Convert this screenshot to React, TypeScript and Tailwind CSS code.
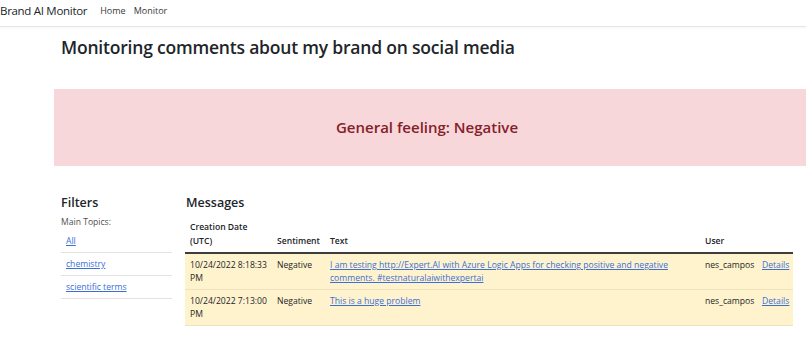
import React from 'react';

const rows = [
  {
    date: '10/24/2022 8:18:33 PM',
    sentiment: 'Negative',
    text: 'I am testing http://Expert.AI with Azure Logic Apps for checking positive and negative comments. #testnaturalaiwithexpertai',
    user: 'nes_campos',
  },
  {
    date: '10/24/2022 7:13:00 PM',
    sentiment: 'Negative',
    text: 'This is a huge problem',
    user: 'nes_campos',
  },
];

const topics = ['All', 'chemistry', 'scientific terms'];

export default function App() {
  return (
    <div className="w-[806px] h-[345px] overflow-hidden bg-white text-[#212529] font-['Open_Sans',sans-serif] text-[8.6px] leading-[13px]">
      <nav className="h-[27px] flex items-center border-b border-[#e6e6e6] shadow-[0_1px_2px_rgba(0,0,0,0.04)]">
        <span className="text-[11.5px] text-[#212529] mr-[13px] -mt-[5px] tracking-[-0.3px]">Brand AI Monitor</span>
        <span className="text-[9px] text-[#3a3a3a] mr-[8px] -mt-[5px]">Home</span>
        <span className="text-[9px] text-[#3a3a3a] -mt-[5px]">Monitor</span>
      </nav>

      <h1 className="ml-[61px] mt-[7px] text-[17.5px] leading-[26px] font-semibold tracking-[-0.2px]">
        Monitoring comments about my brand on social media
      </h1>

      <div className="ml-[54px] mt-[29px] h-[77px] bg-[#f8d7da] flex items-center justify-center pr-[6px]">
        <span className="text-[15px] font-semibold text-[#842029]">General feeling: Negative</span>
      </div>

      <div className="flex mt-[28px]">
        <div className="ml-[61px] w-[111px]">
          <h4 className="text-[12.5px] leading-[18px] font-semibold">Filters</h4>
          <div className="mt-[4px] text-[#4f4f4f]">Main Topics:</div>
          <ul className="mt-[1px]">
            {topics.map((t) => (
              <li key={t} className="h-[23px] pl-[5px] pt-[5px] border-b border-[#e3e3e3]">
                <a className="text-[#3b6fd8] underline">{t}</a>
              </li>
            ))}
          </ul>
        </div>

        <div className="ml-[13px] w-[608px]">
          <h4 className="ml-[1px] text-[12.5px] leading-[18px] font-semibold">Messages</h4>
          <table className="mt-[8px] w-full table-fixed border-collapse text-left">
            <colgroup>
              <col className="w-[88px]" />
              <col className="w-[52px]" />
              <col className="w-[375px]" />
              <col className="w-[57px]" />
              <col className="w-[36px]" />
            </colgroup>
            <thead>
              <tr className="border-b-2 border-[#3d3d3d] align-bottom leading-[14px]">
                <th className="pl-[5px] pr-[3px] pb-[4px] font-semibold">Creation Date (UTC)</th>
                <th className="px-[4px] pb-[4px] font-semibold">Sentiment</th>
                <th className="px-[5px] pb-[4px] font-semibold">Text</th>
                <th className="px-[5px] pb-[4px] font-semibold">User</th>
                <th className="px-[5px] pb-[4px]"></th>
              </tr>
            </thead>
            <tbody>
              {rows.map((r) => (
                <tr key={r.date} className="bg-[#fff3cd] border-b border-[#efe3bf] align-top">
                  <td className="pl-[5px] pr-[2px] pt-[5px] pb-[4px]">{r.date}</td>
                  <td className="px-[4px] pt-[5px] pb-[4px]">{r.sentiment}</td>
                  <td className="px-[5px] pt-[5px] pb-[4px]">
                    <a className="text-[#3b6fd8] underline">{r.text}</a>
                  </td>
                  <td className="px-[5px] pt-[5px] pb-[4px]">{r.user}</td>
                  <td className="px-[5px] pt-[5px] pb-[4px]">
                    <a className="text-[#3b6fd8] underline">Details</a>
                  </td>
                </tr>
              ))}
            </tbody>
          </table>
        </div>
      </div>
    </div>
  );
}
